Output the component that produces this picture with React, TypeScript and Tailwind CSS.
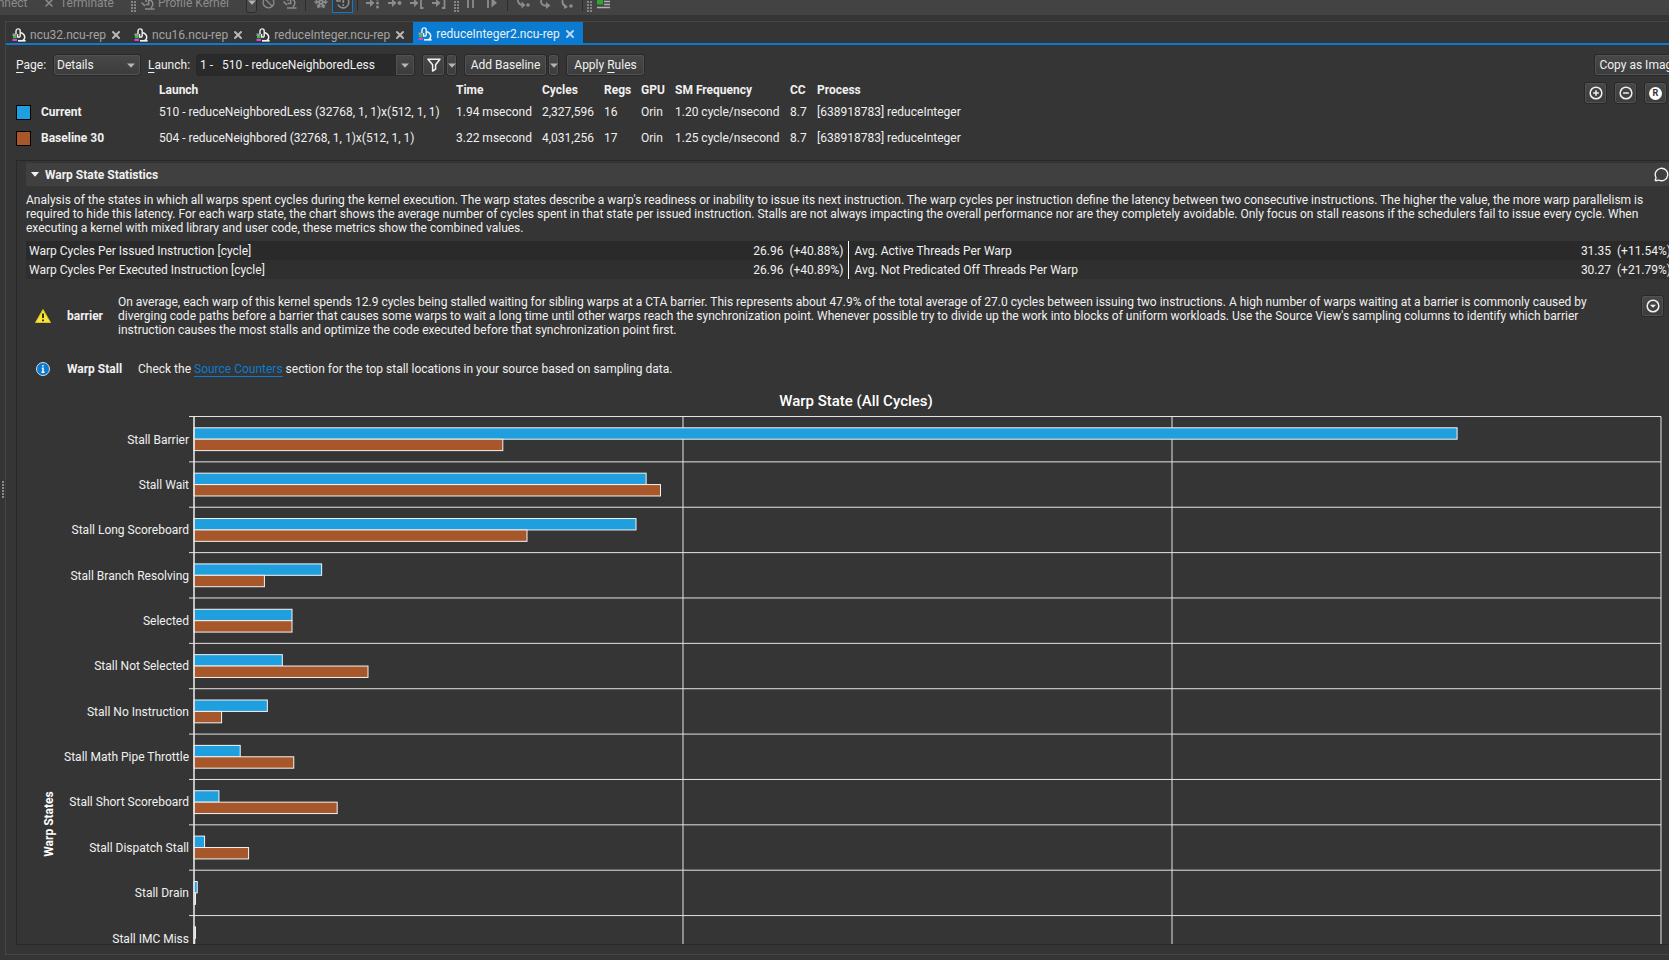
import React from "react";
import {
  Ban,
  CircleMinus,
  CirclePlus,
  MessageCircle,
  Snowflake,
  X,
} from "lucide-react";

const BTN =
  "h-[22px] shrink-0 rounded-[3px] border border-[#282828] bg-gradient-to-b from-[#484848] to-[#3c3c3c] text-[#f0f0f0] shadow-[inset_0_0_0_1px_#525252]";

function Microscope() {
  return (
    <svg viewBox="0 0 14 14" className="h-[14px] w-[14px] shrink-0" fill="none">
      <rect x="0.5" y="5.5" width="4" height="2.5" fill="#8f9a9f" />
      <rect x="1" y="8" width="3.5" height="2.2" fill="#1fd12a" />
      <rect x="0.5" y="10.8" width="4.5" height="2.2" fill="#e23be0" />
      <path d="M4 6V3C4 0.2 8.2 0.2 8.2 3V8.8" stroke="#f2f2f2" strokeWidth="1.4" />
      <path d="M5.6 6V9H8.2" stroke="#f2f2f2" strokeWidth="1.3" />
      <path d="M8.4 4.6c3.2.8 4.800 3.200 4.200 5.600-.3 1.100-.9 1.800-1.800 2.300" stroke="#f2f2f2" strokeWidth="1.5" />
      <path d="M6 12.800H13.600" stroke="#f2f2f2" strokeWidth="1.7" />
    </svg>
  );
}

function KernelIcon() {
  return (
    <svg viewBox="0 0 14 14" className="h-[14px] w-[14px]" fill="none" stroke="#8c8c8c" strokeWidth="1.5">
      <path d="M5 6V2.5C5 1 7.6 1 7.6 2.5V8M0.5 6.5 4 10M4.5 8.5h4M8 4c4 .5 5.200 4.500 2 8M4 13h9.500" />
    </svg>
  );
}

function Caret({ className = "" }: { className?: string }) {
  return (
    <svg viewBox="0 0 8 5" className={`h-[5px] w-[8px] ${className}`} fill="#b4b4b4">
      <path d="M0 0.500H8L4 4.800Z" />
    </svg>
  );
}

function Grip() {
  return (
    <svg viewBox="0 0 5 20" className="h-[20px] w-[5px] shrink-0" fill="#858585">
      {[0, 3, 6, 9, 12, 15, 18].map((y) => (
        <React.Fragment key={y}>
          <rect x="0" y={y} width="2" height="2" />
          <rect x="3" y={y} width="2" height="2" />
        </React.Fragment>
      ))}
    </svg>
  );
}

function Glyph({ d, children }: { d?: string; children?: React.ReactNode }) {
  return (
    <svg viewBox="0 0 14 14" className="h-[14px] w-[14px]" fill="none" stroke="#8c8c8c" strokeWidth="1.8">
      {d && <path d={d} />}
      {children}
    </svg>
  );
}

/* Rightward arrow shared by the API and range stepping tools. */
function ArrowHead() {
  return (
    <>
      <path d="M0 8H5" strokeWidth="2" />
      <path d="M4 4V12L8.500 8Z" fill="#8c8c8c" stroke="none" />
    </>
  );
}

function Dot({ cx, cy, r = 1.5 }: { cx: number; cy: number; r?: number }) {
  return <circle cx={cx} cy={cy} r={r} fill="#8c8c8c" stroke="none" />;
}

function Tool({ label, children }: { label: string; children: React.ReactNode }) {
  return (
    <button aria-label={label} className="flex h-[22px] w-[22px] shrink-0 items-center justify-center">
      {children}
    </button>
  );
}

function Sep() {
  return <span className="mx-[4px] h-[18px] w-px shrink-0 bg-[#2c2c2c]" />;
}

function Toolbar() {
  return (
    <header className="flex h-[15px] shrink-0 items-end overflow-hidden bg-[#434343] pb-[2px] text-[#8c8c8c]">
      <div className="-ml-[17px] flex h-[22px] shrink-0 items-center">
        <button className="w-[44px] pt-[2px] text-right">Connect</button>
        <button className="ml-[16px] flex w-[88px] items-center gap-[5px] pt-[2px]">
          <X size={12} strokeWidth={3} />
          Terminate
        </button>
        <Grip />
        <button className="ml-[5px] flex w-[101px] items-center gap-[3px] pt-[2px]">
          <KernelIcon />
          Profile Kernel
        </button>
        <button
          aria-label="Profile options"
          className="ml-[4px] flex h-[22px] w-[11px] items-center justify-center rounded-[3px] border border-[#2c2c2c] bg-[#4a4a4a]"
        >
          <Caret className="w-[6px]" />
        </button>
        <div className="flex items-center">
          <Tool label="Cancel"><Ban size={13} strokeWidth={2.4} /></Tool>
          <Tool label="Disable kernel"><KernelIcon /></Tool>
          <Sep />
          <Tool label="Freeze"><Snowflake size={14} strokeWidth={3} /></Tool>
          <button
            aria-label="Break on error"
            className="flex h-[22px] w-[21px] shrink-0 items-center justify-center border border-[#0a7bd0] bg-[#393939]"
          >
            <Glyph>
              <path d="M2.300 4.500A5.600 5.600 0 1 1 2 9.500M1 2v4h4" strokeWidth="1.600" />
              <path d="M7.300 4V8M7.300 9.300V11" />
            </Glyph>
          </button>
          <Sep />
          <Tool label="Next call">
            <Glyph><ArrowHead /><Dot cx={11.5} cy={4} /><Dot cx={11.5} cy={8} /><Dot cx={11.5} cy={12} /></Glyph>
          </Tool>
          <Tool label="Next kernel">
            <Glyph><ArrowHead /><Dot cx={11.5} cy={8} r={2} /></Glyph>
          </Tool>
          <Tool label="Range start"><Glyph d="M13.500 3H11v10H13.500"><ArrowHead /></Glyph></Tool>
          <Tool label="Range end"><Glyph d="M10 3h2.500v10H10"><ArrowHead /></Glyph></Tool>
        </div>
        <span className="w-[4px]" />
        <Grip />
        <div className="flex items-center">
          <Tool label="Pause"><Glyph d="M5 2v11M10 2v11" /></Tool>
          <Tool label="Resume"><Glyph d="M3 2v11"><path d="M6.500 3v9.500L12 7.800Z" fill="#8c8c8c" stroke="none" /></Glyph></Tool>
          <Sep />
          <Tool label="Step into">
            <Glyph d="M1.500 2c0 5 1.500 8 5 8"><path d="M5.500 6.500v7L9.500 10Z" fill="#8c8c8c" stroke="none" /><Dot cx={12} cy={10} r={1.8} /></Glyph>
          </Tool>
          <Tool label="Step over">
            <Glyph d="M11 3C4-1 0 8 6 10.500h3"><path d="M8 7v7L12.500 10.500Z" fill="#8c8c8c" stroke="none" /></Glyph>
          </Tool>
          <Tool label="Step out">
            <Glyph d="M9 2.500C1 0 1 9 5.500 11.500"><path d="M4 8.500v5.500L8 12Z" fill="#8c8c8c" stroke="none" /><Dot cx={11} cy={11} r={1.8} /></Glyph>
          </Tool>
          <Sep />
          <Grip />
          <Tool label="Sections">
            <Glyph>
              <rect x="1" y="3" width="6" height="6.500" fill="#2fa52f" stroke="none" />
              <path d="M8 6.500h6M8 9.500h6M1 12.500h13" stroke="#b0b0b0" strokeWidth="1.600" />
            </Glyph>
          </Tool>
        </div>
      </div>
    </header>
  );
}

const TABS = ["ncu32.ncu-rep", "ncu16.ncu-rep", "reduceInteger.ncu-rep", "reduceInteger2.ncu-rep"];

function Tabs() {
  return (
    <nav className="flex h-[23px] shrink-0 border-b-2 border-[#0a7bd0] pl-px">
      {TABS.map((name, i) => {
        const active = i === TABS.length - 1;
        return (
          <div
            key={name}
            className={`flex shrink-0 items-center pl-[5px] ${
              active ? "bg-[#0a7bd0] pt-[2px] pr-[7px] text-[#e6f1fa]" : "pt-[4px] pr-[7px] text-[#a3a3a3]"
            }`}
          >
            <Microscope />
            <button className="ml-[4px]">{name}</button>
            <button aria-label={`Close ${name}`} className="ml-[4px]">
              <X size={12} strokeWidth={4} className={active ? "text-[#b9d9f1]" : "text-[#b8b8b8]"} />
            </button>
          </div>
        );
      })}
    </nav>
  );
}

function Controls() {
  return (
    <div className="flex h-[22px] shrink-0 items-center">
      <label htmlFor="page" className="w-[37px]">
        <u className="underline-offset-3">P</u>age:
      </label>
      <div className="relative">
        <select id="page" className={`${BTN} w-[88px] appearance-none pl-[3px]`}>
          <option>Details</option>
        </select>
        <Caret className="pointer-events-none absolute top-[9px] right-[6px]" />
      </div>
      <label htmlFor="launch" className="ml-[7px] w-[48px]">
        <u className="underline-offset-3">L</u>aunch:
      </label>
      <div className="relative">
        <select
          id="launch"
          className="h-[22px] w-[219px] appearance-none rounded-[3px] border border-[#282828] bg-[#2a2a2a] pl-[3px] text-[#f0f0f0]"
        >
          <option>{"1 -\u00a0\u00a0 510 - reduceNeighboredLess"}</option>
        </select>
        <span
          className={`${BTN} pointer-events-none absolute top-0 right-0 flex w-[20px] items-center justify-center rounded-l-none`}
        >
          <Caret />
        </span>
      </div>
      <button aria-label="Filter" className={`${BTN} ml-[7px] flex w-[23px] items-center justify-center`}>
        <svg viewBox="0 0 14 14" className="h-[14px] w-[14px]" fill="none" stroke="#f2f2f2" strokeWidth="1.500">
          <path d="M1 1.200H13L8.600 6.800V11.200L5.600 13V6.800Z" strokeLinejoin="round" />
        </svg>
      </button>
      <button aria-label="Filter options" className={`${BTN} ml-px flex w-[11px] items-center justify-center`}>
        <Caret className="w-[6px]" />
      </button>
      <button className={`${BTN} ml-[7px] w-[83px]`}>Add Baseline</button>
      <button aria-label="Baseline options" className={`${BTN} ml-px flex w-[11px] items-center justify-center`}>
        <Caret className="w-[6px]" />
      </button>
      <button className={`${BTN} ml-[7px] w-[79px]`}>
        Apply <u className="underline-offset-3">R</u>ules
      </button>
      <button className={`${BTN} ml-auto w-[88px] pl-[2px]`}>Copy as Image</button>
    </div>
  );
}

const LAUNCHES = [
  {
    swatch: "bg-[#209fdf]",
    name: "Current",
    cells: ["510 - reduceNeighboredLess (32768, 1, 1)x(512, 1, 1)", "1.94 msecond", "2,327,596", "16", "Orin", "1.20 cycle/nsecond", "8.7", "[638918783] reduceInteger"],
  },
  {
    swatch: "bg-[#a8572a]",
    name: "Baseline 30",
    cells: ["504 - reduceNeighbored (32768, 1, 1)x(512, 1, 1)", "3.22 msecond", "4,031,256", "17", "Orin", "1.25 cycle/nsecond", "8.7", "[638918783] reduceInteger"],
  },
];

function Launches() {
  return (
    <table className="w-[980px] table-fixed text-left whitespace-nowrap">
      <colgroup>
        <col className="w-[25px]" />
        <col className="w-[118px]" />
        <col className="w-[297px]" />
        <col className="w-[86px]" />
        <col className="w-[62px]" />
        <col className="w-[37px]" />
        <col className="w-[34px]" />
        <col className="w-[115px]" />
        <col className="w-[27px]" />
        <col />
      </colgroup>
      <thead>
        <tr className="h-[18px]">
          <td />
          <td />
          {["Launch", "Time", "Cycles", "Regs", "GPU", "SM Frequency", "CC", "Process"].map((h) => (
            <th key={h} className="font-bold">{h}</th>
          ))}
        </tr>
      </thead>
      <tbody>
        {LAUNCHES.map((row) => (
          <tr key={row.name} className="h-[26px]">
            <td>
              <span className={`block h-[15px] w-[15px] border border-black ${row.swatch}`} />
            </td>
            <th className="font-bold">{row.name}</th>
            {row.cells.map((c, i) => (
              <td key={i}>{c}</td>
            ))}
          </tr>
        ))}
      </tbody>
    </table>
  );
}

const METRICS = [
  ["Warp Cycles Per Issued Instruction [cycle]", "26.96", "(+40.88%)", "Avg. Active Threads Per Warp", "31.35", "(+11.54%)"],
  ["Warp Cycles Per Executed Instruction [cycle]", "26.96", "(+40.89%)", "Avg. Not Predicated Off Threads Per Warp", "30.27", "(+21.79%)"],
];

function Metrics() {
  return (
    <table className="mt-[6px] w-full table-fixed whitespace-nowrap">
      <tbody>
        {METRICS.map((m) => (
          <tr key={m[0]} className="h-[19px] odd:bg-[#2a2a2a] even:bg-[#2f2f2f]">
            <td className="w-[38%] pl-[3px]">{m[0]}</td>
            <td className="w-[12%] border-r border-white pr-[5px] text-right">{m[1]}&nbsp; {m[2]}</td>
            <td className="w-[38%] pl-[5px]">{m[3]}</td>
            <td className="w-[12%] pr-px text-right">{m[4]}&nbsp; {m[5]}</td>
          </tr>
        ))}
      </tbody>
    </table>
  );
}

/* Bar lengths are percentages of the plot's width. */
const STATES: [string, number, number][] = [
  ["Stall Barrier", 86.1, 21.05],
  ["Stall Wait", 30.82, 31.8],
  ["Stall Long Scoreboard", 30.13, 22.7],
  ["Stall Branch Resolving", 8.7, 4.8],
  ["Selected", 6.68, 6.68],
  ["Stall Not Selected", 6.02, 11.86],
  ["Stall No Instruction", 5.0, 1.88],
  ["Stall Math Pipe Throttle", 3.15, 6.8],
  ["Stall Short Scoreboard", 1.7, 9.76],
  ["Stall Dispatch Stall", 0.72, 3.72],
  ["Stall Drain", 0.22, 0.1],
  ["Stall IMC Miss", 0.1, 0.05],
];
const PITCH = 45.37;

function Chart() {
  return (
    <div className="flex min-h-0 flex-1 flex-col overflow-hidden">
      <h2 className="mt-[15px] h-[24px] shrink-0 pl-[14px] text-center text-[15px] leading-[18px] font-medium text-white">
        Warp State (All Cycles)
      </h2>
      <div className="flex min-h-0 flex-1 pr-[11px] pl-[168px]">
        <svg className="h-[532px] w-full overflow-visible" fontSize="12">
          <text transform="translate(-141 408) rotate(-90)" textAnchor="middle" fontWeight="700" fill="#fff">
            Warp States
          </text>
          {STATES.map(([name], i) => {
            const y = 0.5 + i * PITCH;
            return (
              <g key={name}>
                <line x1="-5" x2="100%" y1={y} y2={y} stroke="#e4e4e4" />
                <text x="-5" y={y + 27} textAnchor="end" fill="#f0f0f0">{name}</text>
              </g>
            );
          })}
          {["33.333%", "66.667%", "100%"].map((x) => (
            <line key={x} x1={x} x2={x} y1="0.5" y2="100%" stroke="#e4e4e4" />
          ))}
          {STATES.map(([name, current, baseline], i) => {
            const y = 0.5 + i * PITCH;
            return (
              <g key={name} stroke="#f4f4f4">
                <rect x="0" y={y + 11.3} width={`${current}%`} height="11.4" fill="#209fdf" />
                <rect x="0" y={y + 22.7} width={`${baseline}%`} height="11.4" fill="#a8572a" />
              </g>
            );
          })}
          <line x1="0" x2="0" y1="0" y2="100%" stroke="#e4e4e4" strokeWidth="1.600" />
        </svg>
      </div>
    </div>
  );
}

function WarpSection() {
  return (
    <section className="mt-[9px] flex min-h-0 flex-1 flex-col overflow-hidden border border-[#282828] px-[9px] pt-[2px]">
      <div className="flex h-[23px] shrink-0 items-center bg-[#404040] pr-[3px] pl-[5px]">
        <svg viewBox="0 0 8 5" className="h-[5px] w-[8px]" fill="#f4f4f4">
          <path d="M0 0H8L4 4.800Z" />
        </svg>
        <h2 className="ml-[6px] font-bold">Warp State Statistics</h2>
        <button aria-label="Comments" className="ml-auto">
          <MessageCircle size={15} strokeWidth={2.2} className="text-[#f2f2f2]" />
        </button>
      </div>
      <p className="mt-[7px]">
        Analysis of the states in which all warps spent cycles during the kernel execution. The warp states describe a
        warp's readiness or inability to issue its next instruction. The warp cycles per instruction define the latency
        between two consecutive instructions. The higher the value, the more warp parallelism is required to hide this
        latency. For each warp state, the chart shows the average number of cycles spent in that state per issued
        instruction. Stalls are not always impacting the overall performance nor are they completely avoidable. Only
        focus on stall reasons if the schedulers fail to issue every cycle. When executing a kernel with mixed library
        and user code, these metrics show the combined values.
      </p>
      <Metrics />
      <div className="mt-[16px] flex items-center pl-[9px]">
        <svg viewBox="0 0 16 14" className="h-[14px] w-[16px] shrink-0">
          <path d="M8 0.500 15.500 13.500H0.500Z" fill="#f7e43c" stroke="#d9c41c" />
          <path d="M8 4.500V9M8 10.500V12.300" stroke="#2a2a10" strokeWidth="1.900" />
        </svg>
        <strong className="ml-[16px] w-[51px] shrink-0">barrier</strong>
        <p className="flex-1">
          On average, each warp of this kernel spends 12.9 cycles being stalled waiting for sibling warps at a CTA
          barrier. This represents about 47.9% of the total average of 27.0 cycles between issuing two instructions. A
          high number of warps waiting at a barrier is commonly caused by diverging code paths before a barrier that
          causes some warps to wait a long time until other warps reach the synchronization point. Whenever possible try
          to divide up the work into blocks of uniform workloads. Use the Source View's sampling columns to identify
          which barrier instruction causes the most stalls and optimize the code executed before that synchronization
          point first.
        </p>
        <button
          aria-label="Expand rule"
          className={`${BTN} mr-[8px] ml-[24px] flex w-[23px] items-center justify-center self-start`}
        >
          <svg viewBox="0 0 14 14" className="h-[14px] w-[14px]">
            <circle cx="7" cy="7" r="5.800" fill="none" stroke="#f2f2f2" strokeWidth="1.500" />
            <path d="M4 5.800H10L7 8.800Z" fill="#f2f2f2" />
          </svg>
        </button>
      </div>
      <div className="mt-[24px] flex items-center pl-[9px]">
        <svg viewBox="0 0 16 16" className="h-[16px] w-[16px] shrink-0">
          <circle cx="8" cy="8" r="6.500" fill="#0a7bd0" stroke="#dcdcdc" />
          <path d="M8 4V5.600M6.800 7.200H8V11.200M6.500 11.300H9.600" stroke="#fff" strokeWidth="1.500" fill="none" />
        </svg>
        <strong className="ml-[16px] w-[71px] shrink-0">Warp Stall</strong>
        <p>
          Check the{" "}
          <a href="#source-counters" className="text-[#0a7bd0] underline underline-offset-3">
            Source Counters
          </a>{" "}
          section for the top stall locations in your source based on sampling data.
        </p>
      </div>
      <Chart />
    </section>
  );
}

export default function App() {
  return (
    <div className="flex h-screen flex-col overflow-hidden bg-[#353535] font-[Roboto,sans-serif] text-[12px] leading-[14px] text-[#f0f0f0]">
      <Toolbar />
      <div className="mt-[6px] mb-[5px] flex min-h-0 flex-1">
        <div className="flex w-[5px] shrink-0 items-center pt-[4px] pl-[2px]">
          <svg viewBox="0 0 2 18" className="h-[18px] w-[2px]" fill="#8a8a8a">
            {[0, 3, 6, 9, 12, 15].map((y) => (
              <rect key={y} y={y} width="2" height="2" />
            ))}
          </svg>
        </div>
        <main className="flex min-w-0 flex-1 flex-col border border-r-0 border-[#454545]">
          <Tabs />
          <div className="-mr-[13px] flex min-h-0 flex-1 flex-col pt-[9px] pb-[9px] pl-[10px]">
            <Controls />
            <div className="mt-[5px] flex items-start">
              <Launches />
              <div className="mt-px mr-[15px] ml-auto flex gap-[7px]">
                <button aria-label="Expand all" className={`${BTN} flex w-[23px] items-center justify-center`}>
                  <CirclePlus size={14} strokeWidth={2.6} />
                </button>
                <button aria-label="Collapse all" className={`${BTN} flex w-[23px] items-center justify-center`}>
                  <CircleMinus size={14} strokeWidth={2.6} />
                </button>
                <button aria-label="Reset" className={`${BTN} flex w-[23px] items-center justify-center`}>
                  <span className="flex h-[13px] w-[13px] items-center justify-center rounded-full bg-white text-[9px] leading-[13px] font-bold text-[#333]">
                    R
                  </span>
                </button>
              </div>
            </div>
            <WarpSection />
          </div>
        </main>
      </div>
    </div>
  );
}
